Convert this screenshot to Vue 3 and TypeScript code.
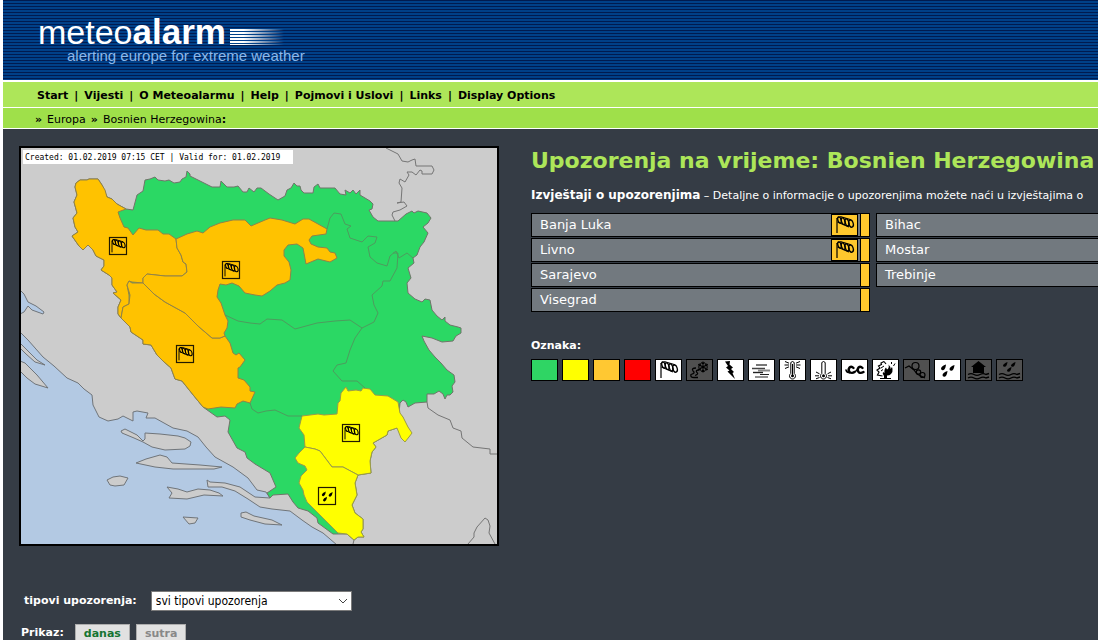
<script setup lang="ts">
import { ref } from 'vue'

interface Region { name: string; wind?: boolean }
interface MapMark { x: number; y: number; icon: string }
interface LegendItem { label: string; icon?: string; tone: string }

const menu: string[] = ['Start', 'Vijesti', 'O Meteoalarmu', 'Help', 'Pojmovi i Uslovi', 'Links', 'Display Options']

const columns: Region[][] = [
  [{ name: 'Banja Luka', wind: true }, { name: 'Livno', wind: true }, { name: 'Sarajevo' }, { name: 'Visegrad' }],
  [{ name: 'Bihac' }, { name: 'Mostar' }, { name: 'Trebinje' }],
]

const marks: MapMark[] = [
  { x: 109, y: 237, icon: 'wind' },
  { x: 222, y: 261, icon: 'wind' },
  { x: 176, y: 345, icon: 'wind' },
  { x: 342, y: 424, icon: 'wind' },
  { x: 318, y: 487, icon: 'rain' },
]

const legend: LegendItem[] = [
  { label: 'zeleno', tone: 'green' },
  { label: 'žuto', tone: 'yellow' },
  { label: 'narandžasto', tone: 'orange' },
  { label: 'crveno', tone: 'red' },
  { label: 'vjetar', icon: 'wind', tone: 'white' },
  { label: 'snijeg / led', icon: 'snow', tone: 'dim' },
  { label: 'oluja', icon: 'storm', tone: 'white' },
  { label: 'magla', icon: 'fog', tone: 'white' },
  { label: 'visoka temperatura', icon: 'heat', tone: 'white' },
  { label: 'niska temperatura', icon: 'cold', tone: 'white' },
  { label: 'obala', icon: 'coast', tone: 'white' },
  { label: 'šumski požar', icon: 'fire', tone: 'white' },
  { label: 'lavina', icon: 'avalanche', tone: 'dim' },
  { label: 'kiša', icon: 'rain', tone: 'white' },
  { label: 'poplava', icon: 'flood', tone: 'dim' },
  { label: 'kiša i poplava', icon: 'rainflood', tone: 'dim' },
]

const warningType = ref('all')
const day = ref('danas')
</script>

<template>
  <div class="page">
    <svg class="defs" aria-hidden="true">
      <symbol id="i-wind" viewBox="0 0 25 20">
        <path d="M5 3V18" stroke="#000" stroke-width="1.200" />
        <path d="M5 4Q6 1.500 9 1.800L19 4.800M5.500 7L17 12" stroke="#000" stroke-width="1.200" fill="none" />
        <g fill="none" stroke="#000" stroke-width="1.300">
          <ellipse cx="7.500" cy="5" rx="1.600" ry="3.200" transform="rotate(-18 7.500 5)" />
          <ellipse cx="11.200" cy="6.200" rx="1.700" ry="3.500" transform="rotate(-18 11.200 6.200)" />
          <ellipse cx="15" cy="7.400" rx="1.800" ry="3.700" transform="rotate(-18 15 7.400)" />
          <ellipse cx="19" cy="8.600" rx="2.200" ry="3.700" transform="rotate(-18 19 8.600)" />
        </g>
      </symbol>
      <symbol id="i-rain" viewBox="0 0 25 20">
        <path v-for="p in ['8 8', '16.5 8.500', '9.500 14.500']" :key="p" :transform="`translate(${p})`" d="M3 -3.500Q-1.500 -2 -2 .5Q-2 2.500 0 2.300Q2.500 1.500 3 -3.500Z" />
      </symbol>
      <symbol id="i-snow" viewBox="0 0 25 20">
        <path d="M16 1.500V12.500M11.200 4.200L20.800 9.800M11.200 9.800L20.800 4.200M14.300 2.500L16 4L17.700 2.500M14.300 11.500L16 10L17.700 11.500M11 6.200L13.500 5.500L13 3.200M21 7.800L18.500 8.500L19 10.800M13 10.800L13.500 8.500L11 7.800M19 3.200L18.500 5.500L21 6.200" stroke="#000" stroke-width="1.100" fill="none" />
        <path d="M9 8Q4 8 6 11Q9 13 4 14.500Q3 17.500 7 17.500H11M12 10Q8 10 10 12.500Q12 14 8 15.500" stroke="#000" stroke-width="1.300" fill="none" />
      </symbol>
      <symbol id="i-storm" viewBox="0 0 25 20">
        <path d="M7 1.500L12 1L11.500 4.500L15 7.500L13 9L16 12L14.500 13L17 19L9.500 11.500L11.500 10.500L8 7.500L10 6Z" />
      </symbol>
      <symbol id="i-fog" viewBox="0 0 25 20">
        <path d="M7 5H18" stroke="#777" stroke-width="2" />
        <path d="M3 8.500H16" stroke="#444" stroke-width="1.500" />
        <path d="M9 10.500H21" stroke="#888" stroke-width="2" />
        <path d="M4 12.500H14" stroke="#222" stroke-width="1.400" />
        <path d="M11 14.500H20M6 17H19" stroke="#222" stroke-width="1.200" />
      </symbol>
      <symbol id="i-heat" viewBox="0 0 25 20">
        <path d="M10.800 13.500V2.500Q12.500 .5 14.200 2.500V13.500A3 3 0 1 1 10.800 13.500Z" fill="#fff" stroke="#000" />
        <path d="M12.500 4V15" stroke="#000" />
        <circle cx="12.500" cy="15.800" r="1.500" />
        <path d="M5 1.500L9 3.200M4.500 5H9M5 8.500L9 6.800M20 1.500L16 3.200M20.500 5H16M20 8.500L16 6.800" stroke="#000" />
      </symbol>
      <symbol id="i-cold" viewBox="0 0 25 20">
        <path d="M10.800 13.500V2.500Q12.500 .5 14.200 2.500V13.500A3 3 0 1 1 10.800 13.500Z" fill="#fff" stroke="#000" />
        <circle cx="12.500" cy="15.800" r="1.500" />
        <path d="M5 12L8.500 13.800M4 15.800H8M5 18.800L8.500 17.500M20 12L16.500 13.800M21 15.800H17M20 18.800L16.500 17.500" stroke="#000" />
      </symbol>
      <symbol id="i-coast" viewBox="0 0 25 20">
        <g fill="none" stroke="#000" stroke-linecap="round">
          <path d="M11.500 8Q9.500 6 7.500 7.500Q5.500 10 8 12.500Q10.500 13.500 12.500 12M20.500 8Q18.500 6 16.500 7.500Q14.500 10 17 12.500Q19 13.500 21.500 12" stroke-width="2.400" />
          <path d="M4 10Q4.500 12.500 8 12.800M12.500 12Q14 11 15 10" stroke-width="1.600" />
        </g>
      </symbol>
      <symbol id="i-fire" viewBox="0 0 25 20">
        <path d="M11 1.500L8 3L8.500 4.500L5.500 6L7 8L4 10L6 12L4.500 15L9.500 16M11 1.500L13 4" fill="none" stroke="#000" stroke-width="1.200" />
        <path d="M11 18.500V16Q9 13.500 10 12L11.500 13Q11 9 13 7.500L14 9.500Q16.500 8 15.500 4.500Q18 7 17.500 9L19 7L19.500 9Q20 12 18 14Q16.500 15.500 14 15.500V18.500Z" />
        <path d="M7 18.500H18M8 8L11 6M8 11L10 9.500M18.500 4V2M20.500 6L22 3.500" stroke="#000" />
      </symbol>
      <symbol id="i-avalanche" viewBox="0 0 25 20">
        <path d="M1 8L5 6L10 10L13 14L21 18" fill="none" stroke="#000" stroke-width="1.200" />
        <g fill="none" stroke="#000" stroke-width="1.200">
          <circle cx="11.500" cy="6" r="3.500" />
          <circle cx="14.500" cy="12" r="2.200" />
          <circle cx="18.500" cy="15" r="2.500" />
        </g>
      </symbol>
      <symbol id="i-flood" viewBox="0 0 25 20">
        <path d="M12.500 1L20 7H18V13H7V7H5Z" />
        <path d="M2 14.500Q5 12.800 8 14.500T14 14.500T20 14.500L23 13.500M2 18Q5 16.300 8 18T14 18T20 18L23 17" fill="none" stroke="#000" stroke-width="1.400" />
      </symbol>
      <symbol id="i-rainflood" viewBox="0 0 25 20">
        <path v-for="p in ['8 5', '16 5', '12 10']" :key="p" :transform="`translate(${p})`" d="M2.500 -3Q-1.500 -1.500 -2 .5Q-2 2 0 1.800Q2 1 2.500 -3Z" />
        <path d="M2 14.500Q5 12.800 8 14.500T14 14.500T20 14.500L23 13.500M2 18Q5 16.300 8 18T14 18T20 18L23 17" fill="none" stroke="#000" stroke-width="1.400" />
      </symbol>
    </svg>

    <header class="banner">
      <a class="logo" href="#">
        <span class="wordmark"><span class="thin">meteo</span><span class="bold">alarm</span><span class="streak"></span></span>
        <span class="tagline">alerting europe for extreme weather</span>
      </a>
    </header>

    <nav class="menu">
      <template v-for="(item, i) in menu" :key="item"><span v-if="i">|</span><a href="#">{{ item }}</a></template>
    </nav>
    <nav class="crumbs"><b>»</b><a href="#">Europa</a><b>»</b><span><a href="#">Bosnien Herzegowina</a><b>:</b></span></nav>

    <main class="content">
      <section class="left">
        <svg class="map" viewBox="21 148 476 396" role="img" aria-label="Bosnien Herzegowina">
          <rect x="21" y="148" width="476" height="396" fill="#ccc" />
          <g class="sea">
            <path d="M20 332L28 340L43 357L54 366L67 378L78 383L84 389L92 395L93 405L99 417L108 421L118 419L123 416L133 421V412L137 411L148 413L146 418L155 418L173 428L187 431L198 437L206 447L215 457L233 467L248 478L257 490L266 492L270 498L255 497L240 487L225 483L210 482L207 480L208 487H222L235 491L248 499L260 507L272 509L290 511L302 520L312 527L323 533L337 545H20V332Z" />
            <path d="M20 290L24 294L28 302L36 306L44 312L43 314L32 310L28 306L24 312L20 314Z" />
          </g>
          <g class="land">
            <path d="M20 343L26 349L37 360L45 365L35 362L26 354L20 348Z" />
            <path d="M20 361L25 363L37 375L48 388L35 384L27 378L20 371Z" />
            <path d="M121 431L125 429L131 432L137 435L143 441L145 439V433L160 434L178 436L185 438L191 442L190 446L185 449L165 450L152 447L143 442L134 438L122 433Z" />
            <path d="M136 463L146 459L160 455L167 457L172 463L200 465L222 467L214 469H173L155 467Z" />
            <path d="M107 480L113 477L120 476L128 478L124 485L115 486L110 485Z" />
            <path d="M167 487L178 489L187 492L198 489L210 490L219 493L223 496L204 495L187 499L169 498L172 493Z" />
            <path d="M183 517L198 518L195 523L189 524Z" />
            <path d="M241 513L246 512L254 516L272 520L282 525L265 524L250 520L241 517Z" />
          </g>
          <g class="line">
            <path d="M386 148L392 151L398 154L402 161L408 162L412 160L415 159L416 166L432 166L434 170L432 174H422V171L420 170L416 175L412 172L407 172L409 175L405 182L400 179L399 183L402 188L401 202L397 203L404 202L407 206L400 210L393 212L392 215L395 221" />
            <path d="M427 402L428 408L438 415L450 420L453 428L461 431L462 438L473 447L490 449V454H498" />
            <path d="M468 544L474 537V533L477 527L485 518L488 520L490 526L489 533L495 544M353 544L354 540" />
          </g>
          <path class="area green" d="M76 183L80 180L87 180L89 179L98 179L102 185L107 197L112 199L117 204L126 209L133 210L137 195L143 191L145 180L150 179L155 177L158 180L165 181L169 180L174 183L180 182L182 179L186 177L187 171L190 174L190 176L202 182L212 187L220 187L221 181L224 184L227 187L234 187L238 186L243 192L247 192L249 188L254 192L257 188L261 188L269 194L278 200L285 196L287 190L291 188L294 183L297 186L300 186L301 190L304 193L313 193L314 187L318 184L320 188L335 188L340 194L346 195L345 190L350 193L353 190L356 194L360 190V195L370 201L373 204L372 209L369 210L373 217L378 221L386 221L398 221L406 214L412 211L414 213L418 211L427 213L431 218L428 223L423 227L428 233L424 242L420 247L417 255L413 258L414 263L408 268L411 278L407 283L408 293L415 299L422 302L425 299L430 300L432 310L437 316L442 320L445 317V321L450 325L458 327L461 328V333L456 336L453 341L442 342L432 338L422 336L424 341L429 350L435 357L441 363L447 370L454 375L455 382L452 386L453 392L450 395L447 395L445 399L443 394L439 391L434 394L427 394V402L415 403L408 407L406 402L403 400L400 403L399 413L403 417L397 428L388 431L387 435L373 443L376 447L372 452L370 461L371 473L358 475L355 483L357 495L352 505L355 513L363 519V529L361 532L364 537L358 537L354 540L347 534H333L318 523L317 518L308 511L298 508L293 502L288 494L273 495L270 498L267 493L276 487L270 473L255 464L247 458L245 452L237 448L228 432L230 420L225 416L217 417L203 407L194 396L182 381L175 379L171 368L163 361L157 355L151 345L143 344V340L131 332L130 327L121 318L118 314V307L121 300L113 293L117 292L112 285V278L109 275L101 270L104 266V260L96 256L93 250L88 245L83 250L79 246L72 236L78 232L75 227L73 218L77 213L74 202L77 195L75 187Z" />
          <path class="area orange" d="M76 183L80 180L87 180L89 179L98 179L102 185L105 190L107 197L112 199L117 204L126 209L118 212L120 218L124 227L128 228L133 235L139 228L146 230L158 230L163 234L169 234L176 239L177 248L181 255L183 262L186 264L187 272L182 276L165 276L147 274L143 278V283L132 282L129 281L127 285L129 295V304L123 307L121 318L118 314V307L121 300L113 293L117 292L112 285V278L109 275L101 270L104 266V260L96 256L93 250L88 245L83 250L79 246L72 236L78 232L75 227L73 218L77 213L74 202L77 195L75 187Z" />
          <path class="area orange" d="M121 318L123 307L129 304L130 295L127 285L129 281L132 283L143 283L154 294L165 302L185 313L198 326L212 338L220 338L225 336L230 343L233 353L236 355L239 353L245 360L240 367L238 368V378L244 380L250 387V391L255 392L250 403L243 401L237 404L235 408L221 407L208 409L203 407L194 396L182 381L175 379L171 368L163 361L157 355L151 345L143 344V340L131 332L130 327Z" />
          <path class="area orange" d="M176 239L187 234L197 231L203 233L210 227L220 223L233 220L245 220L251 226L265 220L270 218L282 220L295 224L303 219L309 219L318 224L327 229L326 234L312 236L309 240L311 244L318 247L327 248L330 252L335 253L337 258L330 262L318 259L306 264L303 248L297 244L288 245L284 250V256L289 262L291 270L290 280L285 283L277 285L270 291L262 296L255 295L245 293L239 286L232 283L226 285L220 284L218 290L217 297L221 303L225 315L228 321L227 328L224 333L225 336L220 338L212 338L198 326L185 313L165 302L154 294L143 283V278L147 274L165 276L182 276L187 272L186 264L183 262L181 255L177 248Z" />
          <path class="area yellow" d="M302 416L318 414L324 415L337 414L338 403L340 401L341 393L346 387L348 391L356 390L361 391L363 388L370 389L375 395L388 396L398 402L400 413L403 417L408 427L412 433L409 437L405 442L401 438L397 428L388 431L387 435L373 443L376 447L372 452L370 461L371 473L358 475L343 467L332 467L320 451L315 449L305 447L304 435L299 428Z" />
          <path class="area yellow" d="M305 447L315 449L320 451L332 467L343 467L358 475L355 483L357 495L352 505L355 513L363 519V529L361 532L364 537L358 537L354 540L347 534L338 533L330 525L307 502L304 495L303 490L299 483L301 476L307 470L305 466L298 463L295 458L299 453Z" />
          <path class="inner" d="M225 315L238 321L250 323L260 324L267 319L282 320L295 329L317 323L335 321L350 320L356 324L362 328M393 253L398 253L397 268L390 281H383L382 286L372 295L374 305L378 313L374 322L362 328L355 338L350 350L346 363L337 365L333 371L342 381H357L365 388M327 229L330 218L334 213L341 214L345 224L351 226L347 229L350 238L362 242L368 236L377 237L375 243L368 247L370 257L377 263L387 266L390 256L396 251L399 258L407 253L413 258M250 403L252 409L258 413L266 411L275 410L288 416H302" />
          <g v-for="m in marks" :key="m.x">
            <rect :x="m.x + 0.5" :y="m.y + 0.5" width="17" height="17" fill="none" stroke="#221a00" stroke-width="1.200" />
            <use :href="`#i-${m.icon}`" :x="m.x - 1" :y="m.y + 1" width="20" height="16" />
          </g>
          <rect x="23" y="150" width="270" height="14" fill="#fff" />
          <text class="stamp" x="25" y="160">Created: 01.02.2019 07:15 CET | Valid for: 01.02.2019</text>
        </svg>

        <form class="controls" @submit.prevent>
          <div class="row filter">
            <label for="type">tipovi upozorenja:</label>
            <span class="picker">
              <select id="type" v-model="warningType"><option value="all">svi tipovi upozorenja</option></select>
              <svg class="chevron" viewBox="0 0 10 6" aria-hidden="true"><path d="M1 1L5 5L9 1" fill="none" stroke="#444" /></svg>
            </span>
          </div>
          <div class="row">
            <span class="caption">Prikaz:</span>
            <button type="button" :class="{ active: day === 'danas' }" @click="day = 'danas'">danas</button>
            <button type="button" :class="{ active: day === 'sutra' }" @click="day = 'sutra'">sutra</button>
          </div>
        </form>
      </section>

      <section class="right">
        <h1>Upozorenja na vrijeme: Bosnien Herzegowina</h1>
        <p class="intro"><b>Izvještaji o upozorenjima</b> – Detaljne o informacije o upozorenjima možete naći u izvještajima o</p>
        <div class="regions">
          <ul v-for="(col, c) in columns" :key="c">
            <li v-for="r in col" :key="r.name">
              <a href="#">{{ r.name }}</a>
              <svg v-if="r.wind" class="warn" viewBox="0 0 25 20" aria-hidden="true"><use href="#i-wind" /></svg>
              <span class="level"></span>
            </li>
          </ul>
        </div>
        <h2>Oznaka:</h2>
        <ul class="legend">
          <li v-for="l in legend" :key="l.label" :class="l.tone" :title="l.label">
            <svg v-if="l.icon" viewBox="0 0 25 20" aria-hidden="true"><use :href="`#i-${l.icon}`" /></svg>
          </li>
        </ul>
      </section>
    </main>
  </div>
</template>

<style>
html { overflow: hidden; background: #fff; }
</style>

<style scoped>
.page {
  margin-left: 3px;
  min-height: 100vh;
  background: #353c45;
  color: #fff;
  font: 11px/14px "DejaVu Sans", Verdana, sans-serif;
}
.defs { position: absolute; width: 0; height: 0; }
a { color: inherit; text-decoration: none; }
ul { list-style: none; margin: 0; padding: 0; }

.banner {
  height: 80px;
  box-sizing: border-box;
  padding: 14px 35px 0;
  background: repeating-linear-gradient(#001b50 0 1px, #004088 1px 3px);
}
.logo { display: inline-block; font-family: "Liberation Sans", Arial, sans-serif; }
.wordmark { display: flex; align-items: flex-end; line-height: 32px; height: 34px; }
.thin { font-size: 34px; }
.bold { font-size: 35px; font-weight: bold; }
.streak {
  width: 54px;
  height: 16px;
  margin: 0 0 3px 4px;
  background: repeating-linear-gradient(#fff 0 2px, transparent 2px 3px);
  mask-image: linear-gradient(90deg, #000 25%, transparent);
}
.tagline { display: block; padding-left: 29px; font-size: 15px; line-height: 16px; color: #8cb8ea; }

.menu, .crumbs { display: flex; color: #000; white-space: nowrap; }
.menu {
  gap: 6px;
  padding: 7px 34px 4px;
  border-top: 2px solid #fff;
  border-bottom: 1px solid #fff;
  background: #ade659;
  font-weight: bold;
}
.crumbs { gap: 5px; padding: 5px 32px 1px; border-bottom: 1px solid #fff; background: #9fe04a; }

.content { display: flex; gap: 32px; padding: 17px 0 0 16px; }
.left { flex: none; }
.map { display: block; width: 476px; border: 2px solid #000; }
.sea path { fill: #b3c9e3; stroke: #70757a; }
.land path { fill: #ccc; stroke: #70757a; }
.line path { fill: none; stroke: #757575; }
.area { stroke: #70756a; stroke-width: 1; stroke-linejoin: round; }
.green { fill: #2bd864; }
.area.orange { fill: #ffc200; stroke: #928248; }
.area.yellow { fill: #ff0; stroke: #9b9b48; }
.inner { fill: none; stroke: #4d9c5e; }
.stamp { font: 8px "DejaVu Sans Mono", monospace; fill: #000; }

.controls { padding-top: 45px; font-weight: bold; }
.row { display: flex; align-items: center; gap: 6px; padding-left: 2px; }
.caption { margin-right: 5px; }
.filter { gap: 14px; padding-left: 5px; margin-bottom: 13px; }
.picker { position: relative; }
.picker select {
  display: block;
  appearance: none;
  width: 201px;
  height: 20px;
  padding: 0 4px;
  border: 1px solid #7a7a7a;
  border-radius: 0;
  background: #fff;
  color: #000;
  font: 12px "DejaVu Sans Condensed", Tahoma, sans-serif;
}
.chevron { position: absolute; right: 4px; top: 7px; width: 10px; height: 6px; }
button {
  height: 18px;
  padding: 0 8px;
  border: 1px solid #adadad;
  background: #e1e1e1;
  color: #888;
  font: bold 11px "DejaVu Sans", Verdana, sans-serif;
}
button.active { color: #167432; }

.right { flex: 1; min-width: 0; overflow: hidden; white-space: nowrap; }
h1 { margin: 0; padding-top: 1px; font-size: 22px; line-height: 28px; color: #ade659; }
.intro { margin: 13px 0 10px; line-height: 14px; }
.intro b { font-size: 12px; }
.regions { display: grid; grid-template-columns: 339px 339px; gap: 6px; }
.regions li {
  display: flex;
  gap: 2px;
  height: 24px;
  box-sizing: border-box;
  margin-bottom: 1px;
  border: 1px solid #000;
  background: #72797f;
  font-size: 13px;
  line-height: 22px;
}
.regions a { flex: 1; padding-left: 8px; }
.warn { width: 25px; height: 20px; border: 1px solid #000; background: #ffc82d; }
.level { width: 8px; border-left: 1px solid #000; background: #ffc82d; }
h2 { margin: 26px 0 6px; font-size: 11px; line-height: 14px; }
.legend { display: flex; gap: 4px; }
.legend li { flex: none; width: 25px; height: 20px; border: 1px solid #000; }
.legend svg { display: block; width: 25px; height: 20px; }
.legend .orange { background: #ffc832; }
.legend .green { background: #2fd564; }
.legend .yellow { background: #ff0; }
.red { background: #f00; }
.white { background: #fff; }
.dim { background: #505050; }
</style>
